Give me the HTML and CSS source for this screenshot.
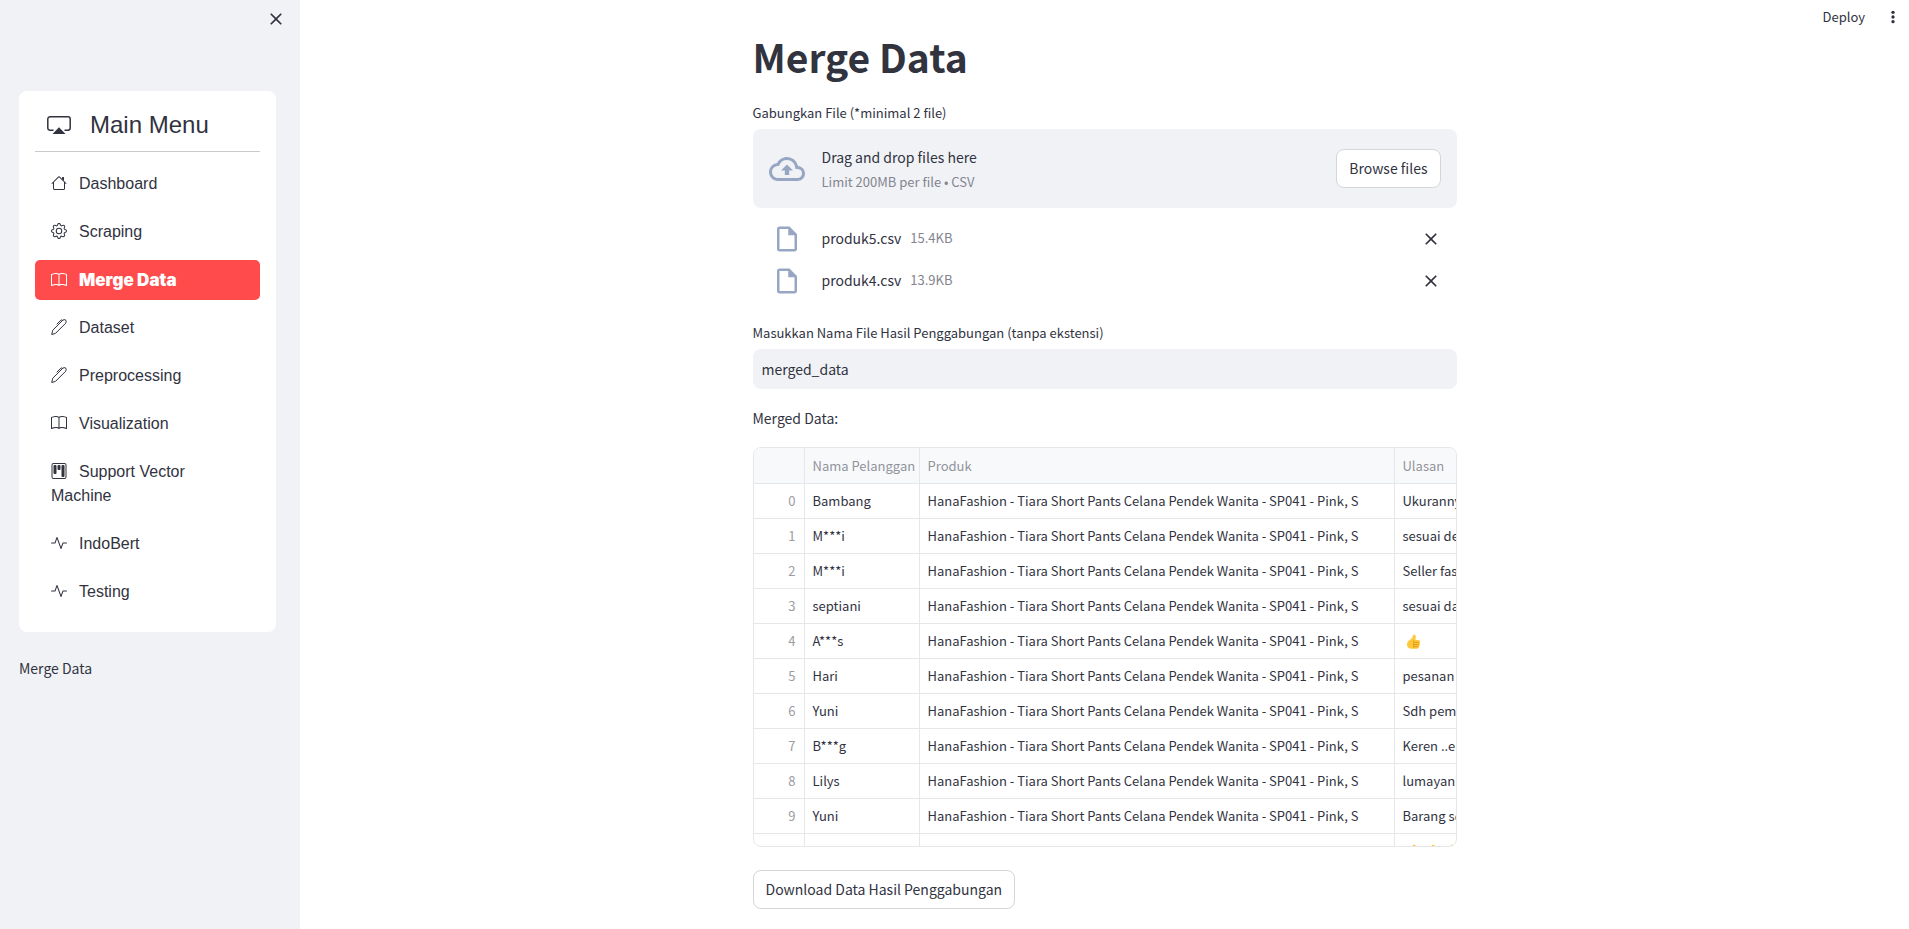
FILE: index.html
```html
<!DOCTYPE html>
<html lang="id">
<head>
<meta charset="utf-8">
<title>Merge Data</title>
<link rel="stylesheet" href="styles.css">
</head>
<body>
<svg class="sprite" aria-hidden="true">
  <symbol id="i-house" viewBox="0 0 16 16"><path fill-rule="evenodd" d="M2 13.500V7h1v6.500a.5.5 0 0 0 .5.5h9a.5.5 0 0 0 .5-.5V7h1v6.500a1.500 1.500 0 0 1-1.500 1.500h-9A1.500 1.500 0 0 1 2 13.500zm11-11V6l-2-2V2.500a.5.5 0 0 1 .5-.5h1a.5.5 0 0 1 .5.5z"/><path fill-rule="evenodd" d="M7.293 1.500a1 1 0 0 1 1.414 0l6.647 6.646a.5.5 0 0 1-.708.708L8 2.207 1.354 8.854a.5.5 0 1 1-.708-.708L7.293 1.500z"/></symbol>
  <symbol id="i-gear" viewBox="0 0 16 16"><path d="M8 4.754a3.246 3.246 0 1 0 0 6.492 3.246 3.246 0 0 0 0-6.492zM5.754 8a2.246 2.246 0 1 1 4.492 0 2.246 2.246 0 0 1-4.492 0z"/><path d="M9.796 1.343c-.527-1.790-3.065-1.790-3.592 0l-.094.319a.873.873 0 0 1-1.255.520l-.292-.160c-1.640-.892-3.433.902-2.540 2.541l.159.292a.873.873 0 0 1-.520 1.255l-.319.094c-1.790.527-1.790 3.065 0 3.592l.319.094a.873.873 0 0 1 .520 1.255l-.160.292c-.892 1.640.901 3.434 2.541 2.540l.292-.159a.873.873 0 0 1 1.255.520l.094.319c.527 1.790 3.065 1.790 3.592 0l.094-.319a.873.873 0 0 1 1.255-.520l.292.160c1.640.893 3.434-.902 2.540-2.541l-.159-.292a.873.873 0 0 1 .520-1.255l.319-.094c1.790-.527 1.790-3.065 0-3.592l-.319-.094a.873.873 0 0 1-.520-1.255l.160-.292c.893-1.640-.902-3.433-2.541-2.540l-.292.159a.873.873 0 0 1-1.255-.520l-.094-.319zm-2.633.283c.246-.835 1.428-.835 1.674 0l.094.319a1.873 1.873 0 0 0 2.693 1.115l.291-.160c.764-.415 1.600.420 1.184 1.185l-.159.292a1.873 1.873 0 0 0 1.116 2.692l.318.094c.835.246.835 1.428 0 1.674l-.319.094a1.873 1.873 0 0 0-1.115 2.693l.160.291c.415.764-.420 1.600-1.185 1.184l-.291-.159a1.873 1.873 0 0 0-2.693 1.116l-.094.318c-.246.835-1.428.835-1.674 0l-.094-.319a1.873 1.873 0 0 0-2.692-1.115l-.292.160c-.764.415-1.600-.420-1.184-1.185l.159-.291A1.873 1.873 0 0 0 1.945 8.930l-.319-.094c-.835-.246-.835-1.428 0-1.674l.319-.094A1.873 1.873 0 0 0 3.060 4.377l-.160-.292c-.415-.764.420-1.600 1.185-1.184l.292.159a1.873 1.873 0 0 0 2.692-1.115l.094-.319z"/></symbol>
  <symbol id="i-book" viewBox="0 0 16 16"><path d="M1 2.828c.885-.370 2.154-.769 3.388-.893 1.330-.134 2.458.063 3.112.752v9.746c-.935-.530-2.120-.603-3.213-.493-1.180.120-2.370.461-3.287.811V2.828zm7.500-.141c.654-.689 1.782-.886 3.112-.752 1.234.124 2.503.523 3.388.893v9.923c-.918-.350-2.107-.692-3.287-.810-1.094-.111-2.278-.039-3.213.492V2.687zM8 1.783C7.015.936 5.587.810 4.287.940c-1.514.153-3.042.672-3.994 1.105A.5.5 0 0 0 0 2.500v11a.5.5 0 0 0 .707.455c.882-.400 2.303-.881 3.680-1.020 1.409-.142 2.590.087 3.223.877a.5.5 0 0 0 .780 0c.633-.790 1.814-1.019 3.222-.877 1.378.139 2.800.620 3.681 1.020A.5.5 0 0 0 16 13.500v-11a.5.5 0 0 0-.293-.455c-.952-.433-2.480-.952-3.994-1.105C10.413.809 8.985.936 8 1.783z"/></symbol>
  <symbol id="i-pen" viewBox="0 0 16 16"><path fill="none" stroke="currentColor" stroke-width="1" stroke-linejoin="round" stroke-linecap="round" d="M.8 15.200 1.700 11.300 11.700 1.300Q13.100.2 14.600.9 15.800 2.600 14.700 4.200L4.900 14zM6 5 9.900 1.200Q10.700.5 11.600 1.300"/></symbol>
  <symbol id="i-kanban" viewBox="0 0 16 16"><path d="M13.500 1a1 1 0 0 1 1 1v12a1 1 0 0 1-1 1h-11a1 1 0 0 1-1-1V2a1 1 0 0 1 1-1h11zm-11-1a2 2 0 0 0-2 2v12a2 2 0 0 0 2 2h11a2 2 0 0 0 2-2V2a2 2 0 0 0-2-2h-11z"/><path d="M6.500 3a1 1 0 0 1 1-1h1a1 1 0 0 1 1 1v3a1 1 0 0 1-1 1h-1a1 1 0 0 1-1-1V3zm-4 0a1 1 0 0 1 1-1h1a1 1 0 0 1 1 1v7a1 1 0 0 1-1 1h-1a1 1 0 0 1-1-1V3zm8 0a1 1 0 0 1 1-1h1a1 1 0 0 1 1 1v10a1 1 0 0 1-1 1h-1a1 1 0 0 1-1-1V3z"/></symbol>
  <symbol id="i-activity" viewBox="0 0 16 16"><path fill-rule="evenodd" d="M6 2a.5.5 0 0 1 .470.330L10 12.036l1.530-4.208A.5.5 0 0 1 12 7.500h3.500a.5.5 0 0 1 0 1h-3.150l-1.880 5.170a.5.5 0 0 1-.940 0L6 3.964 4.470 8.171A.5.5 0 0 1 4 8.500H.5a.5.5 0 0 1 0-1h3.150l1.880-5.170A.5.5 0 0 1 6 2z"/></symbol>
  <symbol id="i-close" viewBox="0 0 24 24"><path d="M19 6.410 17.590 5 12 10.590 6.410 5 5 6.410 10.590 12 5 17.590 6.410 19 12 13.410 17.590 19 19 17.590 13.410 12z"/></symbol>
  <symbol id="i-file" viewBox="0 0 24 24"><path d="M14 2H6c-1.100 0-2 .9-2 2v16c0 1.100.9 2 2 2h12c1.100 0 2-.9 2-2V8l-6-6zM6 20V4h7v5h5v11H6z"/></symbol>
  <symbol id="i-thumb" viewBox="0 0 16 16"><path fill="#ffc83d" d="M8.600.8c1.300-.5 2.300.3 2.200 1.800L10.500 6h2.700c1.600 0 2 1.500 1.300 2.300.8.6.7 1.800-.1 2.300.5.8.1 1.800-.7 2.100.3 1.200-.5 2-1.600 2H6.800C3.700 14.700 2 13.100 2 10.700c0-2.500 1.300-4 3.200-5.200C7 4.300 7.600 3 7.800 1.700c0-.5.3-.8.8-.9z"/><path fill="none" stroke="#e59a13" stroke-width="1" d="M9 8.300h5.200M9 10.600h5M9 12.700h4.400M9.300 6.200c-1 .6-1.300 1.500-.6 2.400v5"/></symbol>
</svg>
<div class="app">
  <aside class="sidebar">
    <div class="sidebar-top">
      <button class="icon-button" type="button" aria-label="Close sidebar"><svg><use href="#i-close"/></svg></button>
    </div>
    <nav class="menu" aria-label="Main Menu">
      <div class="menu-title">
        <svg viewBox="0 0 24 24" aria-hidden="true"><path fill="none" stroke="currentColor" stroke-width="1.500" d="M6.500 17.200H3a2.200 2.200 0 0 1-2.200-2.200V6A2.200 2.200 0 0 1 3 3.800h18A2.200 2.200 0 0 1 23.200 6v9a2.200 2.200 0 0 1-2.200 2.200h-3.500"/><path fill="currentColor" d="M12 14.200 18.500 21h-13z"/></svg>
        <span>Main Menu</span>
      </div>
      <hr>
      <ul>
        <li><a href="#"><svg><use href="#i-house"/></svg>Dashboard</a></li>
        <li><a href="#"><svg><use href="#i-gear"/></svg>Scraping</a></li>
        <li><a href="#" class="active" aria-current="page"><svg><use href="#i-book"/></svg>Merge Data</a></li>
        <li><a href="#"><svg><use href="#i-pen"/></svg>Dataset</a></li>
        <li><a href="#"><svg><use href="#i-pen"/></svg>Preprocessing</a></li>
        <li><a href="#"><svg><use href="#i-book"/></svg>Visualization</a></li>
        <li><a href="#"><svg><use href="#i-kanban"/></svg>Support Vector Machine</a></li>
        <li><a href="#"><svg><use href="#i-activity"/></svg>IndoBert</a></li>
        <li><a href="#"><svg><use href="#i-activity"/></svg>Testing</a></li>
      </ul>
    </nav>
    <p class="sidebar-note">Merge Data</p>
  </aside>
  <div class="page">
    <header class="toolbar">
      <button class="deploy" type="button">Deploy</button>
      <button class="icon-button" type="button" aria-label="Menu"><svg viewBox="0 0 24 24"><circle cx="12" cy="5" r="2.500"/><circle cx="12" cy="12" r="2.500"/><circle cx="12" cy="19" r="2.500"/></svg></button>
    </header>
    <main class="content">
      <h1>Merge Data</h1>
      <section class="uploader">
        <span class="label" id="upload-label">Gabungkan File (*minimal 2 file)</span>
        <div class="dropzone">
          <svg viewBox="0 0 24 24" aria-hidden="true"><path d="M19.350 10.040A7.490 7.490 0 0 0 12 4C9.110 4 6.600 5.640 5.350 8.040A5.994 5.994 0 0 0 0 14c0 3.310 2.690 6 6 6h13c2.760 0 5-2.240 5-5 0-2.640-2.050-4.780-4.650-4.960zM19 18H6c-2.210 0-4-1.790-4-4 0-2.050 1.530-3.760 3.560-3.970l1.070-.110.5-.950A5.469 5.469 0 0 1 12 6c2.620 0 4.880 1.860 5.390 4.430l.3 1.500 1.530.110A2.980 2.980 0 0 1 22 15c0 1.650-1.350 3-3 3zM8 13h2.550v3h2.900v-3H16l-4-4z"/></svg>
          <div class="drop-text">
            <span>Drag and drop files here</span>
            <small>Limit 200MB per file • CSV</small>
          </div>
          <button class="button" type="button" aria-describedby="upload-label">Browse files</button>
        </div>
        <ul class="files">
          <li><svg class="file-icon"><use href="#i-file"/></svg><span>produk5.csv</span><small>15.4KB</small><button class="icon-button" type="button" aria-label="Remove produk5.csv"><svg><use href="#i-close"/></svg></button></li>
          <li><svg class="file-icon"><use href="#i-file"/></svg><span>produk4.csv</span><small>13.9KB</small><button class="icon-button" type="button" aria-label="Remove produk4.csv"><svg><use href="#i-close"/></svg></button></li>
        </ul>
      </section>
      <div class="field">
        <label class="label" for="filename">Masukkan Nama File Hasil Penggabungan (tanpa ekstensi)</label>
        <input id="filename" type="text" value="merged_data">
      </div>
      <p class="caption">Merged Data:</p>
      <div class="grid">
        <table>
          <colgroup><col class="c-index"><col class="c-name"><col class="c-product"><col class="c-review"></colgroup>
          <thead><tr><th></th><th>Nama Pelanggan</th><th>Produk</th><th>Ulasan</th></tr></thead>
          <tbody>
            <tr><td>0</td><td>Bambang</td><td>HanaFashion - Tiara Short Pants Celana Pendek Wanita - SP041 - Pink, S</td><td>Ukuranny</td></tr>
            <tr><td>1</td><td>M***i</td><td>HanaFashion - Tiara Short Pants Celana Pendek Wanita - SP041 - Pink, S</td><td>sesuai de</td></tr>
            <tr><td>2</td><td>M***i</td><td>HanaFashion - Tiara Short Pants Celana Pendek Wanita - SP041 - Pink, S</td><td>Seller fast</td></tr>
            <tr><td>3</td><td>septiani</td><td>HanaFashion - Tiara Short Pants Celana Pendek Wanita - SP041 - Pink, S</td><td>sesuai da</td></tr>
            <tr><td>4</td><td>A***s</td><td>HanaFashion - Tiara Short Pants Celana Pendek Wanita - SP041 - Pink, S</td><td><svg class="thumb" role="img" aria-label="thumbs up"><use href="#i-thumb"/></svg></td></tr>
            <tr><td>5</td><td>Hari</td><td>HanaFashion - Tiara Short Pants Celana Pendek Wanita - SP041 - Pink, S</td><td>pesanan</td></tr>
            <tr><td>6</td><td>Yuni</td><td>HanaFashion - Tiara Short Pants Celana Pendek Wanita - SP041 - Pink, S</td><td>Sdh pemb</td></tr>
            <tr><td>7</td><td>B***g</td><td>HanaFashion - Tiara Short Pants Celana Pendek Wanita - SP041 - Pink, S</td><td>Keren ..en</td></tr>
            <tr><td>8</td><td>Lilys</td><td>HanaFashion - Tiara Short Pants Celana Pendek Wanita - SP041 - Pink, S</td><td>lumayan</td></tr>
            <tr><td>9</td><td>Yuni</td><td>HanaFashion - Tiara Short Pants Celana Pendek Wanita - SP041 - Pink, S</td><td>Barang sd</td></tr>
            <tr><td></td><td></td><td></td><td><svg class="thumb"><use href="#i-thumb"/></svg><svg class="thumb"><use href="#i-thumb"/></svg><svg class="thumb"><use href="#i-thumb"/></svg></td></tr>
          </tbody>
        </table>
      </div>
      <button class="button" type="button">Download Data Hasil Penggabungan</button>
    </main>
  </div>
</div>
</body>
</html>
```
FILE: styles.css
```css
* { box-sizing: border-box; }

:root {
  --ink: #31333f;
  --muted: #83858f;
  --panel: #f0f2f6;
  --slate: #97a6c3;
  --line: #e6e7e9;
}

body {
  margin: 0;
  color: var(--ink);
  background: #fff;
  font-family: "Noto Sans CJK JP", "Noto Sans", sans-serif;
  font-size: 14px;
  line-height: 24px;
}

button, input { font: inherit; color: inherit; }
ul { list-style: none; margin: 0; padding: 0; }
p { margin: 0; }
svg { fill: currentColor; }
.sprite { position: absolute; width: 0; height: 0; }

.app { display: flex; min-height: 100vh; }

/* Sidebar */
.sidebar { width: 300px; flex: none; background: var(--panel); padding: 0 24px 24px 19px; }
.sidebar-top { display: flex; justify-content: flex-end; height: 91px; padding-top: 9px; margin-right: -10px; }

.icon-button {
  display: grid;
  place-items: center;
  width: 20px;
  height: 20px;
  padding: 0;
  border: 0;
  background: none;
}
.icon-button svg { width: 20px; height: 20px; }

.menu {
  background: #fff;
  border-radius: 8px;
  padding: 16px;
  font-family: "Liberation Sans", Arial, sans-serif;
  font-size: 16px;
}
.menu-title { display: flex; align-items: center; gap: 19px; padding: 0 12px; height: 36px; font-size: 24px; }
.menu-title svg { width: 24px; height: 24px; }
.menu hr { margin: 8px 0; border: 0; border-top: 1px solid #c9cacd; }
.menu li { padding: 4px 0; }
.menu a { display: block; padding: 8px 16px; border-radius: 5px; color: inherit; text-decoration: none; }
.menu a svg { width: 16px; height: 16px; margin-right: 12px; vertical-align: -2px; }
.menu a.active { background: #ff4b4b; color: #fff; font-family: Inter, "Liberation Sans", sans-serif; font-size: 17px; font-weight: 900; }
.sidebar-note { margin-top: 24px; }

/* Main column */
.page { flex: 1; min-width: 0; }
.toolbar { display: flex; justify-content: flex-end; align-items: center; gap: 18px; height: 34px; padding-right: 6px; }
.toolbar .icon-button svg { width: 16px; height: 16px; }
.deploy { border: 0; padding: 0; background: none; font-size: 13px; }

.content { max-width: 704px; margin: 0 auto; }
h1 { margin: 0 0 24px; font-size: 39px; line-height: 44px; font-weight: 700; }
.label { display: block; margin-bottom: 5px; font-size: 13px; line-height: 22px; }
small { font-size: 13px; line-height: 20px; color: var(--muted); }

.dropzone { display: flex; align-items: center; padding: 16px; border-radius: 8px; background: var(--panel); }
.dropzone > svg { width: 36px; height: 36px; margin-right: 17px; color: var(--slate); }
.drop-text { display: flex; flex-direction: column; flex: 1; gap: 3px; }
.button { padding: 7px 12px; border: 1px solid #d6d6d9; border-radius: 8px; background: #fff; line-height: 23px; }

.files { padding: 10px 16px 0; }
.files li { display: flex; align-items: center; height: 42px; }
.file-icon { width: 30px; height: 30px; margin: 0 20px 0 3px; color: var(--slate); }
.files span, .files small { padding-bottom: 2px; }
.files small { margin-left: 9px; }
.files .icon-button { margin-left: auto; }

.field { margin-top: 20px; }
.field input { display: block; width: 100%; height: 40px; padding: 0 9px; border: 0; border-radius: 8px; background: var(--panel); }
.caption { margin: 17px 0; }

/* Data grid */
.grid { height: 400px; margin-bottom: 23px; overflow: hidden; border: 1px solid var(--line); border-radius: 8px; }
table { width: 100%; table-layout: fixed; border-collapse: separate; border-spacing: 0; font-size: 13px; line-height: 20px; }
th, td { height: 35px; padding: 0 8px; overflow: hidden; white-space: nowrap; text-align: left; border-right: 1px solid var(--line); border-bottom: 1px solid var(--line); }
th { height: 36px; padding-right: 0; background: #f8f9fb; color: #92949c; font-weight: 400; }
th:last-child, td:last-child { border-right: 0; padding-right: 0; }
td:first-child { text-align: right; color: #9b9da5; }
.c-index { width: 51px; }
.c-name { width: 115px; }
.c-product { width: 475px; }
.thumb { width: 16px; height: 16px; margin-left: 2px; vertical-align: middle; }
.thumb + .thumb { margin-left: 3px; }
```
